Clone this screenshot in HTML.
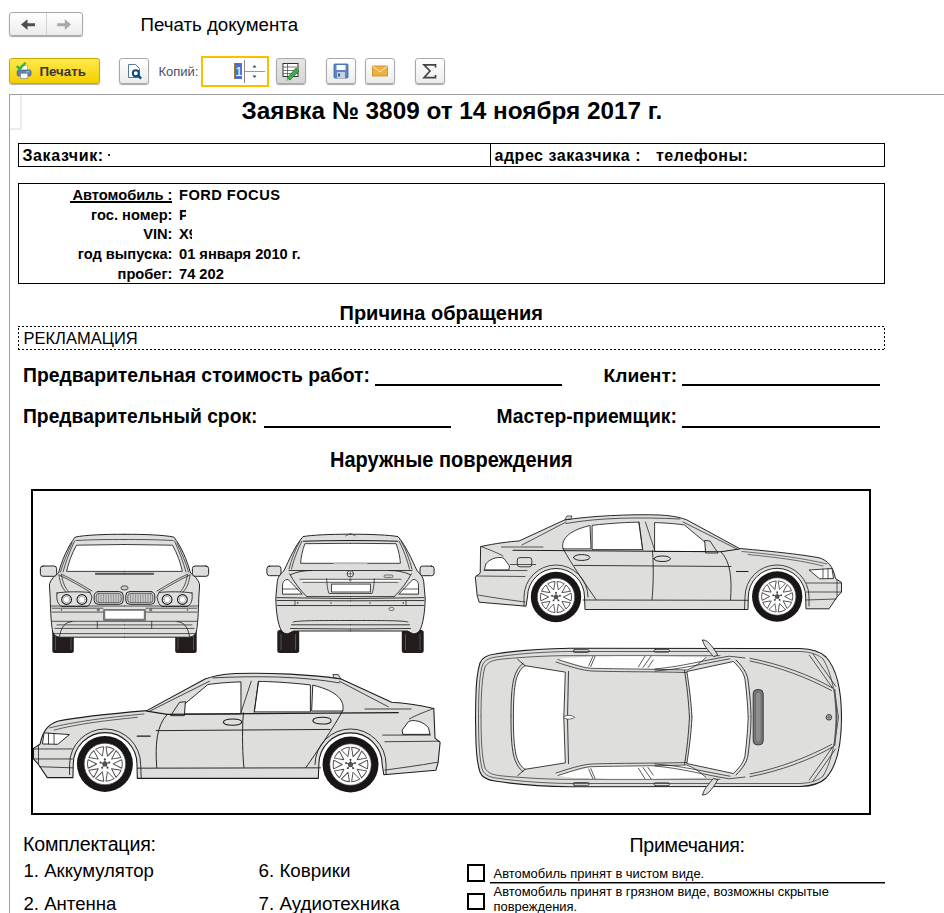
<!DOCTYPE html>
<html><head><meta charset="utf-8">
<style>
html,body{margin:0;padding:0;background:#fff;width:944px;height:913px;overflow:hidden;position:relative;}
body{font-family:"Liberation Sans",sans-serif;color:#000;}
.a{position:absolute;}
.t{position:absolute;white-space:pre;line-height:1;}
.b{font-weight:bold;}
.btn{position:absolute;box-sizing:border-box;border:1px solid #a9a9a9;border-radius:3px;background:linear-gradient(#ffffff,#ececec);box-shadow:0 1px 1px rgba(0,0,0,0.35);}
</style></head><body>

<!-- nav buttons -->
<div class="btn" style="left:9px;top:12px;width:74px;height:24px;"></div>
<div class="a" style="left:46px;top:13px;width:1px;height:22px;background:#d4d4d4;"></div>
<svg class="a" style="left:0;top:0" width="100" height="45">
  <path d="M21 24.6 L27.5 19.3 L27.5 23.2 L35 23.2 L35 26.2 L27.5 26.2 L27.5 29.9 Z" fill="#505050"/>
  <path d="M71 24.6 L64.8 19.3 L64.8 23.2 L57.2 23.2 L57.2 26.2 L64.8 26.2 L64.8 29.9 Z" fill="#a8a8a8"/>
</svg>
<div class="t" style="left:140.5px;top:16.2px;font-size:18.7px;">Печать документа</div>

<!-- toolbar -->
<div class="a" style="left:9px;top:58px;width:91px;height:26px;box-sizing:border-box;border:1px solid #c9a800;border-radius:3px;background:linear-gradient(#ffe84c,#f4cf00);box-shadow:0 1px 1px rgba(0,0,0,0.3);"></div>
<div class="t b" style="left:39.5px;top:65px;font-size:13.3px;color:#3d3535;">Печать</div>
<svg class="a" style="left:14px;top:60px" width="22" height="22">
  <rect x="6.9" y="5.5" width="6.5" height="5.5" fill="#fff" stroke="#9aa" stroke-width="0.6"/>
  <rect x="3.2" y="10" width="13.8" height="6" rx="1.6" fill="#5f83b0" stroke="#3d5a80" stroke-width="0.7"/>
  <rect x="6.4" y="13.2" width="7.4" height="5.3" fill="#fff" stroke="#6a7a8a" stroke-width="0.6"/>
  <path d="M12.5 11.8 H15.2" stroke="#fff" stroke-width="0.9" stroke-dasharray="1,0.8"/>
  <path d="M2.8 6 L5.6 8.8 L11.6 2.8" stroke="#36b036" stroke-width="2.3" fill="none" stroke-linejoin="miter"/>
</svg>

<div class="btn" style="left:119px;top:58px;width:30px;height:26px;"></div>
<svg class="a" style="left:119px;top:58px" width="30" height="26">
  <path d="M9.5 6.5 L16.5 6.5 L20.5 10.5 L20.5 19.5 L9.5 19.5 Z" fill="#fff" stroke="#4a6a8a" stroke-width="0.9"/>
  <circle cx="16.8" cy="15.2" r="3" fill="#fff" stroke="#0e4a7e" stroke-width="2"/>
  <path d="M19.2 17.6 L22.2 20.6" stroke="#0e4a7e" stroke-width="2.3"/>
</svg>
<div class="t" style="left:158.5px;top:64.5px;font-size:13px;color:#4a4d6a;">Копий:</div>

<div class="a" style="left:201px;top:56px;width:68px;height:31px;box-sizing:border-box;border:2px solid #f5c200;background:#fff;"></div>
<div class="a" style="left:235px;top:63px;width:7px;height:16px;background:#4b6fd2;"></div>
<div class="t" style="left:235.3px;top:64.5px;font-size:13px;color:#fff;">1</div><div class="a" style="left:234px;top:63px;width:1px;height:16px;background:#9a7a30;"></div>
<div class="a" style="left:244px;top:60px;width:1px;height:23px;background:#8a8a8a;"></div>
<div class="a" style="left:245px;top:71px;width:20px;height:1px;background:#9a9a9a;"></div>
<svg class="a" style="left:250px;top:63px" width="10" height="18">
  <path d="M2.5 4.5 L4.5 2 L6.5 4.5 Z" fill="#444"/>
  <path d="M2.5 12.5 L4.5 15 L6.5 12.5 Z" fill="#444"/>
</svg>

<div class="btn" style="left:276px;top:58px;width:30px;height:26px;background:linear-gradient(#e6e6e6,#d6d6d6);"></div>
<svg class="a" style="left:276px;top:58px" width="30" height="26">
  <rect x="7" y="5.5" width="15" height="13" fill="#fff" stroke="#333" stroke-width="1"/>
  <path d="M7 9 H22 M7 12.5 H22 M7 15.5 H22 M11.5 5.5 V18.5" stroke="#555" stroke-width="0.8"/>
  <path d="M11 20 L20 10 L23 13 L14 22 Z" fill="#3fae4a" stroke="#1d6b2a" stroke-width="0.7"/>
  <path d="M11 20 L10 23 L13 22 Z" fill="#c8a060"/>
</svg>

<div class="btn" style="left:326px;top:58px;width:30px;height:26px;"></div>
<svg class="a" style="left:326px;top:58px" width="30" height="26">
  <rect x="8" y="6" width="14" height="14" rx="1" fill="#5a86c8" stroke="#3a5f98" stroke-width="0.8"/>
  <rect x="10.5" y="7" width="9" height="5" fill="#fff"/>
  <rect x="11" y="14" width="8" height="6" fill="#c8d0d8"/>
  <rect x="12" y="15.5" width="2" height="3" fill="#3a5f98"/>
</svg>

<div class="btn" style="left:365px;top:58px;width:30px;height:26px;"></div>
<svg class="a" style="left:365px;top:58px" width="30" height="26">
  <rect x="7.5" y="8" width="15" height="10" fill="#f0b040" stroke="#c88a20" stroke-width="0.8"/>
  <path d="M7.5 8 L15 14 L22.5 8" stroke="#fff3c8" stroke-width="1" fill="none"/>
</svg>

<div class="btn" style="left:415px;top:58px;width:30px;height:26px;"></div>
<svg class="a" style="left:415px;top:58px" width="30" height="26"><path d="M20.5,9.5 L20.5,6.8 L9,6.8 L15,13 L9,19.6 L20.5,19.6 L20.5,17" fill="none" stroke="#444" stroke-width="1.7" stroke-linejoin="miter"/></svg>

<!-- doc frame -->
<div class="a" style="left:9px;top:94px;width:935px;height:1px;background:#a0a0a0;"></div>
<div class="a" style="left:9px;top:94px;width:1px;height:819px;background:#a0a0a0;"></div>
<div class="a" style="left:20px;top:95px;width:2px;height:35px;background:#ececec;"></div>
<div class="a" style="left:10px;top:128px;width:12px;height:2px;background:#ececec;"></div>

<!-- title -->
<div class="t b" style="left:241.5px;top:99.2px;font-size:24.3px;">Заявка № 3809 от 14 ноября 2017 г.</div>

<!-- customer row -->
<div class="a" style="left:18px;top:143px;width:867px;height:24px;box-sizing:border-box;border:1px solid #000;"></div>
<div class="a" style="left:490px;top:143px;width:1px;height:24px;background:#000;"></div>
<div class="t b" style="left:22.5px;top:148px;font-size:16px;letter-spacing:0.6px;">Заказчик:</div><div class="a" style="left:108px;top:154px;width:2px;height:2px;background:#222;"></div>
<div class="t b" style="left:494.5px;top:148px;font-size:16px;letter-spacing:0.52px;">адрес заказчика :   телефоны:</div>

<!-- car info -->
<div class="a" style="left:18px;top:183px;width:867px;height:101px;box-sizing:border-box;border:1px solid #000;"></div>

<div class="t b" style="left:0;width:172.5px;text-align:right;top:188px;font-size:14.67px;">Автомобиль :</div>
<div class="a" style="left:70px;top:201px;width:102px;height:2px;background:#000;"></div>
<div class="t b" style="left:0;width:172.5px;text-align:right;top:207.5px;font-size:14.67px;">гос. номер:</div>
<div class="t b" style="left:0;width:172.5px;text-align:right;top:227.3px;font-size:14.67px;">VIN:</div>
<div class="t b" style="left:0;width:172.5px;text-align:right;top:247px;font-size:14.67px;">год выпуска:</div>
<div class="t b" style="left:0;width:172.5px;text-align:right;top:267px;font-size:14.67px;">пробег:</div>
<div class="t b" style="left:179px;top:188px;font-size:14.67px;letter-spacing:0.45px;">FORD FOCUS</div>
<div class="t b" style="left:179px;top:207.5px;font-size:14.67px;width:6.5px;overflow:hidden;">Р</div>
<div class="t b" style="left:179px;top:227.3px;font-size:14.67px;width:13px;overflow:hidden;">X9</div>
<div class="t b" style="left:179px;top:247px;font-size:14.67px;">01 января 2010 г.</div>
<div class="t b" style="left:179px;top:267px;font-size:14.67px;">74 202</div>


<!-- reason -->
<div class="t b" style="left:339.5px;top:302.7px;font-size:20px;transform:scaleY(1.04);transform-origin:0 17px;">Причина обращения</div>
<div class="a" style="left:18px;top:326px;width:867px;height:1px;background:repeating-linear-gradient(90deg,#000 0 2px,transparent 2px 4px);"></div>
<div class="a" style="left:18px;top:349px;width:867px;height:1px;background:repeating-linear-gradient(90deg,#000 0 2px,transparent 2px 4px);"></div>
<div class="a" style="left:18px;top:328px;width:1px;height:21px;background:repeating-linear-gradient(180deg,#000 0 2px,transparent 2px 4px);"></div>
<div class="a" style="left:884px;top:328px;width:1px;height:21px;background:repeating-linear-gradient(180deg,#000 0 2px,transparent 2px 4px);"></div>
<div class="t" style="left:23.5px;top:330px;font-size:16.5px;">РЕКЛАМАЦИЯ</div>

<div class="t b" style="left:23px;top:365.7px;font-size:19.35px;">Предварительная стоимость работ:</div>
<div class="a" style="left:375px;top:384px;width:187px;height:2px;background:#000;"></div>
<div class="t b" style="left:603.5px;top:365.5px;font-size:19.2px;">Клиент:</div>
<div class="a" style="left:682px;top:384px;width:198px;height:2px;background:#000;"></div>
<div class="t b" style="left:23px;top:407.2px;font-size:19.3px;">Предварительный срок:</div>
<div class="a" style="left:264px;top:426px;width:187px;height:2px;background:#000;"></div>
<div class="t b" style="left:496.5px;top:407.2px;font-size:19.3px;">Мастер-приемщик:</div>
<div class="a" style="left:682px;top:426px;width:198px;height:2px;background:#000;"></div>

<div class="t b" style="left:330px;top:450px;font-size:20px;transform:scaleY(1.085);transform-origin:0 17px;">Наружные повреждения</div>

<!-- cars frame -->
<div class="a" style="left:31px;top:489px;width:840px;height:326px;box-sizing:border-box;border:2px solid #000;"></div>
<svg id="cars" class="a" style="left:0;top:0" width="944" height="913" viewBox="0 0 944 913">
<defs><g id="side" stroke="#1c1c1c" stroke-width="0.96" stroke-linejoin="round" stroke-linecap="round">
  <path fill="#dededc" d="M481,546.5 C495,543.5 510,541.5 519,541 L564.5,520 C590,516 630,514 660,515 C675,516 682,518 687,520 L739.5,548.5 C775,551.5 805,555 820,558 C828,561 833,566 835.5,578.5 L841.5,582.5 L841.5,592 L837,597 L829,608.8 L806,608.8 L805.7,597 A28.7,28.7 0 0 0 748.3,597 L748,609.5 L585,609.5 L584.5,597 A28.5,28.5 0 0 0 527.5,597 L526,606.2 L479.2,602.2 L477.2,595.7 L475.3,577 L479.9,573.3 Z"/>
  <!-- windows -->
  <path fill="#fff" stroke-width="0.84" d="M563,548.5 C561,540 567,531 590,525.5 L591,548.5 Z"/>
  <path fill="#fff" stroke-width="0.84" d="M592.5,525.3 C612,523 630,522.2 639,522.2 L642.6,549.6 L592.5,549.6 Z"/>
  <path fill="#fff" stroke-width="0.84" d="M655,522.6 C668,523 678,524 684.5,525 L706,543 L706,551.5 L655,551.5 Z"/>
  <path fill="none" stroke-width="0.6" d="M742,551.5 C775,554.5 805,558.5 827,564 M748,554.5 C778,557.5 802,560.5 823,566"/>
  <!-- mirror -->
  <path fill="#dededc" stroke-width="0.84" d="M705,540.5 L710,541 L718,553 L706,553 Z"/>
  <!-- roof rail / double lines -->
  <path fill="none" stroke-width="0.72" d="M566,523.5 C600,517.5 640,517 680,519 M683,522 L737,549 M522,545 L566,522"/>
  <!-- belt line -->
  <path fill="none" stroke-width="1.08" d="M513,550.3 L721,551.8 L739.5,549"/>
  <!-- trunk lines -->
  <path fill="none" stroke-width="0.72" d="M481,546.5 C490,550 498,553 503,556 M501.5,547 L543,547 M484,570.5 L527,570.5 M476,576 L525,576.5 M478,595 C495,598 510,600 525,602"/>
  <!-- C-pillar / door lines -->
  <path fill="none" stroke-width="0.84" d="M563,548.5 C572,565 586,585 596,599.5 M652.5,550.5 C654,570 653,590 652,599.5 M721,551.8 C731,562 732,580 730.5,599.8 M574.5,565.4 L731,566.5 M583,600 L748,600.3"/>
  <!-- B pillar -->
  <path fill="none" stroke-width="0.72" d="M638.8,522 L642.8,550 M645.4,522 L654.6,550"/>
  <!-- door handles -->
  <path fill="none" stroke-width="0.96" d="M573.5,557.5 C573.5,553.5 589,553.5 590,557.5 C589,561.5 573.5,561.5 573.5,557.5 Z M654,558.8 C654,555 670,555 670.5,558.8 C670,562.5 654,562.5 654,558.8 Z"/>
  <!-- tail light -->
  <path fill="#fff" stroke-width="0.84" d="M484.5,569.5 L485.8,564 C490,558 500,556 504,558.5 L509.5,566 L509,569.5 Z"/>
  <!-- headlight -->
  <path fill="#fff" stroke-width="0.84" d="M809.5,570 L832,568.5 L833.5,578.5 L820,578.8 Z"/>
  <path fill="none" stroke-width="0.72" d="M823,569 L823,578 M828,568.8 L828,578.5 M837,580 L837,596 M806.5,583 L841,583 M806.5,592 L841,592 M806,600 L836,599"/>
  <!-- front side marker -->
  <path fill="none" stroke-width="1.2" d="M736.5,571.5 L748,571.5"/>
  <!-- arches outline lines -->
  <path fill="none" stroke-width="0.8" d="M744.5,609 L745,597 A32,32 0 0 1 809,597 L809,606 M524,606 L524,597 A32,32 0 0 1 588,597"/>
  <!-- antenna -->
  <path fill="#dededc" stroke-width="0.72" d="M565,519.5 L567,516 L572,516 L571,518.5 Z"/>
</g>
<g id="fuel" stroke="#1c1c1c" fill="none">  
  <rect x="517.3" y="557.6" width="14.5" height="9.2" rx="2.5" fill="none" stroke-width="0.84"/>
  <path fill="none" stroke-width="0.72" d="M510,564.5 L536,564.5"/>
</g>
<g id="wheel">
  <circle r="25.2" fill="#1a1616"/>
  <circle r="18.7" fill="#fff" stroke="#444" stroke-width="0.6"/>
  <g stroke="#4a4a4a" stroke-width="0.85" fill="none" stroke-linejoin="round">
    <path id="wop" d="M2.287,-7.038 L0.98,-15.569 A15.6,15.6 0 0 1 8.359,-13.172 Z"/><use href="#wop" transform="rotate(36)"/><use href="#wop" transform="rotate(72)"/><use href="#wop" transform="rotate(108)"/><use href="#wop" transform="rotate(144)"/><use href="#wop" transform="rotate(180)"/><use href="#wop" transform="rotate(216)"/><use href="#wop" transform="rotate(252)"/><use href="#wop" transform="rotate(288)"/><use href="#wop" transform="rotate(324)"/>
  </g>
  <path d="M0,0 L0.0,-4.2 M0,0 L3.994,-1.298 M0,0 L2.469,3.398 M0,0 L-2.469,3.398 M0,0 L-3.994,-1.298" stroke="#444" stroke-width="0.8"/>
  <g fill="#444"><circle cx="0.0" cy="-4.2" r="0.95"/><circle cx="3.994" cy="-1.298" r="0.95"/><circle cx="2.469" cy="3.398" r="0.95"/><circle cx="-2.469" cy="3.398" r="0.95"/><circle cx="-3.994" cy="-1.298" r="0.95"/></g>
  <circle r="2" fill="#555" stroke="#222" stroke-width="0.5"/>
</g>
</defs>
<use href="#side"/><use href="#fuel"/><use href="#wheel" x="556" y="597"/><use href="#wheel" x="777.2" y="596.5"/>
<g transform="matrix(-1.1104,0,0,1.1104,967.9,101.6)"><use href="#side"/><use href="#wheel" x="556" y="597"/><use href="#wheel" x="777.2" y="596.5"/></g>
<defs>
<g id="fhalf" stroke="#1c1c1c" stroke-width="0.96" stroke-linejoin="round" stroke-linecap="round">
  
  
  
  <path fill="none" d="M124.5,534.3 C105,534.2 85,535 75.2,537.1 C68,546 62,560 58.5,573 C53,577 50,581 49.4,585 L50.2,598 C50.5,612 51.3,626 52.8,632 C54.5,636.5 58,637.5 63,637.2 L124.5,637.2"/>
  
  <path fill="none" stroke-width="0.84" d="M124.5,544.5 L76.5,545.2 C71.5,554 68.5,563 66.6,571.4 L124.5,571.4"/>
  <path fill="none" stroke-width="0.72" d="M76,540.5 C95,539.5 110,539.5 124.5,539.5 M72,543 C67,554 63,563 60.5,572 M74.5,541 C69,553 65.5,563 63,572"/>
  <rect x="95.1" y="572.8" width="30" height="2" fill="#555" stroke="none"/>
  <!-- mirror -->
  <rect x="40.4" y="566" width="16.2" height="10.3" rx="2.6" fill="#dededc" stroke-width="0.96"/>
  <!-- hood creases -->
  <path fill="none" stroke-width="0.72" d="M59,575 C70,580 80,586 90,592 M61,574 C72,579 82,585 92,591 M59,575 C60,583 62,588 66,592 M61.5,575 C63,583 65,588 69,592"/>
  <!-- headlight housing -->
  <path fill="#dededc" stroke-width="0.84" d="M57,593 C65,591.5 82,591.5 90,592.5 L92,597 C91,602 90,605 87,606.5 L62,606.5 C58,605 56,600 57,593 Z"/>
  <circle cx="66.6" cy="599.5" r="4.9" fill="#fff" stroke-width="1.08"/>
  <circle cx="81.9" cy="599.5" r="4.9" fill="#fff" stroke-width="1.08"/><circle cx="66.6" cy="599.5" r="3.3" fill="none" stroke="#777" stroke-width="0.6"/><circle cx="81.9" cy="599.5" r="3.3" fill="none" stroke="#777" stroke-width="0.6"/>
  <!-- grille -->
  <rect x="94.2" y="591.6" width="29" height="12.7" rx="4" fill="#dededc" stroke-width="0.96"/>
  <rect x="96.2" y="593.4" width="25" height="9.2" rx="2.5" fill="#c8c8c8" stroke-width="0.6"/>
  <path fill="none" stroke="#777" stroke-width="0.6" d="M98.5,593.5 V602.5 M101,593.5 V602.5 M103.5,593.5 V602.5 M106,593.5 V602.5 M108.5,593.5 V602.5 M111,593.5 V602.5 M113.5,593.5 V602.5 M116,593.5 V602.5 M118.5,593.5 V602.5"/>
  <!-- bumper lines -->
  <path fill="none" stroke-width="0.72" d="M51,606 L124.5,606 M52,608.2 L103,608.2 M52,612.1 L103,612.1 M52,621.3 L124.5,621.3 M57,624.9 L124.5,624.9 M55,628.4 L124.5,628.4 M53,633.6 L124.5,633.6 M97.3,621.3 V628.4"/>
  <circle cx="61.5" cy="610" r="0.8" fill="#444" stroke="none"/>
  <circle cx="98.1" cy="610" r="1" fill="none" stroke-width="0.6"/>
  <path fill="none" stroke-width="0.8" d="M72,621.6 C65,622 61,627 59.5,636.5"/>
  <!-- plate -->
  
  
</g>
<g id="rhalf" stroke="#1c1c1c" stroke-width="0.96" stroke-linejoin="round" stroke-linecap="round">
  
  
  
  <path fill="none" d="M350.5,534.2 C330,534.2 312,535 303,536.6 C295,546 289,560 283.9,570.9 C280,574 278,577 277.3,581.4 L275.8,598 C276,612 278,624 281,630 C283,633 285.5,634 288,633.8 L293.5,631 L350.5,631"/>
  
  <path fill="none" stroke-width="0.84" d="M350.5,543.3 L304.9,543.7 C302.5,550 301,557 300.6,563.3 L350.5,563.3"/>
  <path fill="none" stroke-width="1.08" d="M303.5,541.3 C320,540.5 335,540.5 350.5,540.5"/>
  <path fill="none" stroke-width="0.72" d="M300,541 C295,550 292,558 289,569 M302,541 C297,551 294,559 291.5,569"/>
  <!-- trunk lines -->
  <path fill="none" stroke-width="0.84" d="M289,570.5 L350.5,570.5 M290.6,574.7 C297,571.5 305,570.5 312,570.5 M289.6,573.8 C294,582 300,590 306.8,596.6 M306.8,596.6 L350.5,596.6"/>
  <rect x="266.9" y="566.1" width="14.1" height="9.6" rx="2.6" fill="#dededc" stroke-width="0.96"/>
  <!-- tail light -->
  <path fill="#fff" stroke-width="0.84" d="M282.5,593.8 L282.5,585 C283,581 285,579.5 288,579.5 C291,582 296,588 302,593.8 Z"/>
  <path fill="none" stroke-width="0.72" d="M283,589 L298,589"/>
  <path fill="#fff" stroke="none" d="M300,579.3 L351,579.3 L351,582.3 L303,582.3 Z"/>
  <path fill="none" stroke-width="0.72" d="M300,579.3 L350.5,579.3 M303,582.3 L350.5,582.3 M326.7,578.8 C327,585 327.5,590 329,593.5 L350.5,593.5"/>
  <!-- bumper -->
  <path fill="none" stroke-width="0.84" d="M277,597.6 L350.5,598.6 M277,600.5 L350.5,600.8 M277.5,605.5 L350.5,605.6 M293,622 C296,620.5 320,620.5 350.5,620.5 M291.5,624.8 L350.5,624.8 M290.5,628.5 L350.5,629"/>
  <circle cx="297.7" cy="602.9" r="0.8" fill="#444" stroke="none"/>
  <circle cx="331" cy="603" r="0.8" fill="#444" stroke="none"/>
  <path fill="none" stroke-width="0.72" d="M295,600.8 V605.5"/>
  <!-- plate -->
  
  <path fill="#bbb" stroke="none" d="M334.5,562.4 L351,562.4 L351,564.3 L333,564.3 Z"/>
</g>
<g id="fbase"><rect x="52.3" y="630" width="21.5" height="23" rx="2.5" fill="#221c1c" stroke="none"/><path d="M55.5,636 L55.5,650 M71,636 L71,650" stroke="#777" stroke-width="0.6"/><path fill="#dededc" stroke="none" d="M125,534.3 C105,534.2 85,535 75.2,537.1 C68,546 62,560 58.5,573 C53,577 50,581 49.4,585 L50.2,598 C50.5,612 51.3,626 52.8,632 C54.5,636.5 58,637.5 63,637.2 L125,637.2 Z"/><path fill="#fff" stroke="none" d="M125,544.5 L76.5,545.2 C71.5,554 68.5,563 66.6,571.4 L125,571.4 Z"/></g><g id="rbase"><rect x="277.3" y="630" width="21.9" height="23" rx="2.5" fill="#221c1c" stroke="none"/><path d="M281,634 L281,650 M295.5,634 L295.5,650" stroke="#777" stroke-width="0.6"/><path fill="#dededc" stroke="none" d="M351,534.2 C330,534.2 312,535 303,536.6 C295,546 289,560 283.9,570.9 C280,574 278,577 277.3,581.4 L275.8,598 C276,612 278,624 281,630 C283,633 285.5,634 288,633.8 L293.5,631 L351,631 Z"/><path fill="#fff" stroke="none" d="M351,543.3 L304.9,543.7 C302.5,550 301,557 300.6,563.3 L351,563.3 Z"/></g></defs>
<use href="#fbase"/><use href="#fbase" transform="matrix(-1,0,0,1,249,0)"/><use href="#fhalf"/><use href="#fhalf" transform="matrix(-1,0,0,1,249,0)"/>
<ellipse cx="124.5" cy="587.9" rx="3.6" ry="2.1" fill="#ccc" stroke="#333" stroke-width="0.84"/>

<use href="#rbase"/><use href="#rbase" transform="matrix(-1,0,0,1,701,0)"/><use href="#rhalf"/><use href="#rhalf" transform="matrix(-1,0,0,1,701,0)"/>
<circle cx="350.3" cy="573.8" r="3.2" fill="#fff" stroke="#333" stroke-width="0.96"/>
<path d="M350.3,570.6 V577 M347.1,573.8 H353.5" stroke="#333" stroke-width="0.72"/>
<circle cx="350.3" cy="580" r="1" fill="none" stroke="#444" stroke-width="0.72"/>
<path d="M345.5,536 L350.5,533.5 L355.5,536" fill="none" stroke="#444" stroke-width="0.72"/>
<rect x="384" y="575" width="9" height="2.4" rx="1.2" fill="none" stroke="#444" stroke-width="0.72"/>
<ellipse cx="391.5" cy="609" rx="2.6" ry="1.6" fill="none" stroke="#444" stroke-width="0.72"/>

<rect x="103" y="609.1" width="43" height="11.8" rx="1.2" fill="#777"/><rect x="105.2" y="610.8" width="38.6" height="7.9" fill="#fff"/>
<rect x="331.5" y="584.1" width="39" height="7.9" fill="#fff" stroke="#444" stroke-width="0.96"/><defs>
<g id="thalf" stroke="#1c1c1c" stroke-width="0.96" stroke-linejoin="round" stroke-linecap="round">
  <path fill="#dededc" stroke="none" d="M475.5,718 L475.8,700 C476,685 477,672 480,663 C482,657 487,655 495,654 C520,650 545,648.5 570,648.2 L800,648.5 C815,649 822,653 826,657 C836,668 841.5,690 841.5,718 Z"/>
  <path fill="none" stroke-width="1.08" d="M475.5,718 L475.8,700 C476,685 477,672 480,663 C482,657 487,655 495,654 C520,650 545,648.5 570,648.2 L800,648.5 C815,649 822,653 826,657 C836,668 841.5,690 841.5,718"/>
  <path fill="none" stroke-width="0.66" d="M478.5,718 C478.5,692 479.5,675 482.5,665 C485,659.5 490,657.5 500,656.5 C520,653.5 545,651.8 570,651.5 L800,651.5 C812,652 819,655 823,659 M481,718 C481,694 482,677 485,667 C488,661.5 493,660 503,659 C525,657 545,656 560,655.7 L720,655.7 M823,659 C830,670 835,690 838.5,718"/>
  <!-- rear window -->
  <path fill="#fff" stroke="none" d="M525.1,665.7 L565.3,672.1 L563.8,718 L513.4,718 C513.4,700 514,690 516,680 C518,673 521,668 525.1,665.7 Z"/>
  <path fill="none" stroke-width="0.84" d="M563.8,718 L565.3,672.1 L525.1,665.7 C521,668 518,673 516,680 C514,690 513.4,700 513.4,718 M567.5,718 L568.5,671.5 M523,663.5 C519,666 515.5,672 513.5,680 C511.5,690 511,700 511,718 M517.7,659.4 L525.1,665.7"/>
  <!-- side window -->
  <path fill="#fff" stroke="none" d="M558,659.5 C570,656.4 600,656.2 650,656.2 L706,657.5 C700,663 695,667 686.8,670 C650,669 620,669 592,668.3 C580,665.5 568,662 558,659.5 Z"/>
  <path fill="none" stroke-width="0.72" d="M556,662 C568,666 582,670.5 592,671 C620,672 650,671.5 686.8,672.5 M558,659.5 C575,665 585,668.3 592,668.3 C620,669 650,669 686.8,670 C695,667 700,663 706,657.5 M638.4,666.8 L645,656.2 M643,667.5 L651,656.2 M648,667.5 L653.2,660 M588.6,666 L592.8,656.5 M590.8,666.5 L595,656.5 M655,668.9 C680,667 705,660 729.2,656.2 L745,658 M655,671 C680,669.5 706,663 730,658.8"/>
  <!-- windshield -->
  <path fill="#fff" stroke="none" d="M686.8,671.5 L733.4,661.5 C740,668 744,673 745,679.5 C747,695 748,710 748.2,718 L692,718 C691,700 689,685 686.8,671.5 Z"/>
  <path fill="none" stroke-width="0.84" d="M692,718 C691,700 689,685 686.8,671.5 L733.4,661.5 C740,668 744,673 745,679.5 C747,695 748,710 748.2,718 M689.5,718 C688.5,700 687,686 684.5,670.5 M736,660 C743,667 747,673 748,680 C750,695 751,708 751,718"/>
  <!-- mirror -->
  <path fill="#dededc" stroke-width="0.84" d="M702.7,640.2 C706,638.5 712,645 717.8,655.3 L713.5,656.5 C708,650.5 703,644.5 702.7,640.2 Z"/>
  <!-- handles -->
  <rect x="573.2" y="649.6" width="15.9" height="2.9" rx="1.4" fill="none" stroke-width="0.72"/>
  <rect x="654" y="649.4" width="15.5" height="2.8" rx="1.4" fill="none" stroke-width="0.72"/>
  <!-- hood creases -->
  <path fill="none" stroke-width="0.72" d="M750,658.3 C780,664 810,675 832.6,688 M750,661 C780,667 808,678 831.5,690.5 M809.3,655.1 L832.6,688 M813,654 L835.5,686"/>
  <path fill="none" stroke="#555" stroke-width="1.92" stroke-dasharray="1,1" d="M834.5,690 C835.5,700 836.3,708 836.5,718"/>
</g>
</defs>
<use href="#thalf"/><use href="#thalf" transform="matrix(1,0,0,-1,0,1435)"/>
<rect x="753.2" y="689.6" width="10" height="55.2" rx="4" fill="#7a7a7a" stroke="#333" stroke-width="0.96"/>
<rect x="755.5" y="692.5" width="5.4" height="49.5" rx="2.5" fill="#a0a0a0" stroke="#555" stroke-width="0.6"/><path d="M757,694 V741 M759,694 V741" stroke="#666" stroke-width="0.6"/>
<circle cx="828.9" cy="717.3" r="2.8" fill="#bbb" stroke="#333" stroke-width="0.9"/><path d="M828.9,714.5 V720.1 M826.1,717.3 H831.7" stroke="#444" stroke-width="0.6"/>
<path d="M563.5,717.3 C566,714.5 572,715 574.8,717.3 C572,719.5 566,720 563.5,717.3 Z" fill="#fff" stroke="#333" stroke-width="0.72"/>

</svg>

<!-- bottom -->
<div class="t" style="left:23px;top:835.3px;font-size:19.6px;letter-spacing:-0.2px;">Комплектация:</div>
<div class="t" style="left:23.5px;top:862px;font-size:18.6px;">1. Аккумулятор</div>
<div class="t" style="left:23.5px;top:895px;font-size:18.6px;">2. Антенна</div>
<div class="t" style="left:258.5px;top:862px;font-size:18.8px;">6. Коврики</div>
<div class="t" style="left:258.5px;top:894.5px;font-size:18.8px;">7. Аудиотехника</div>
<div class="t" style="left:629.5px;top:835.5px;font-size:19.6px;letter-spacing:-0.3px;">Примечания:</div>

<div class="a" style="left:467px;top:864px;width:18px;height:18px;box-sizing:border-box;border:2px solid #000;"></div>
<div class="a" style="left:467px;top:893px;width:18px;height:17px;box-sizing:border-box;border:2px solid #000;"></div>
<div class="t" style="left:493.5px;top:868.2px;font-size:12.95px;">Автомобиль принят в чистом виде.</div>
<div class="a" style="left:490px;top:882px;width:395px;height:1px;background:#000;border-bottom:1px solid #888;"></div>
<div class="t" style="left:493.5px;top:886.2px;font-size:12.95px;">Автомобиль принят в грязном виде, возможны скрытые</div>
<div class="t" style="left:493.5px;top:901.2px;font-size:12.95px;">повреждения.</div>

</body></html>
